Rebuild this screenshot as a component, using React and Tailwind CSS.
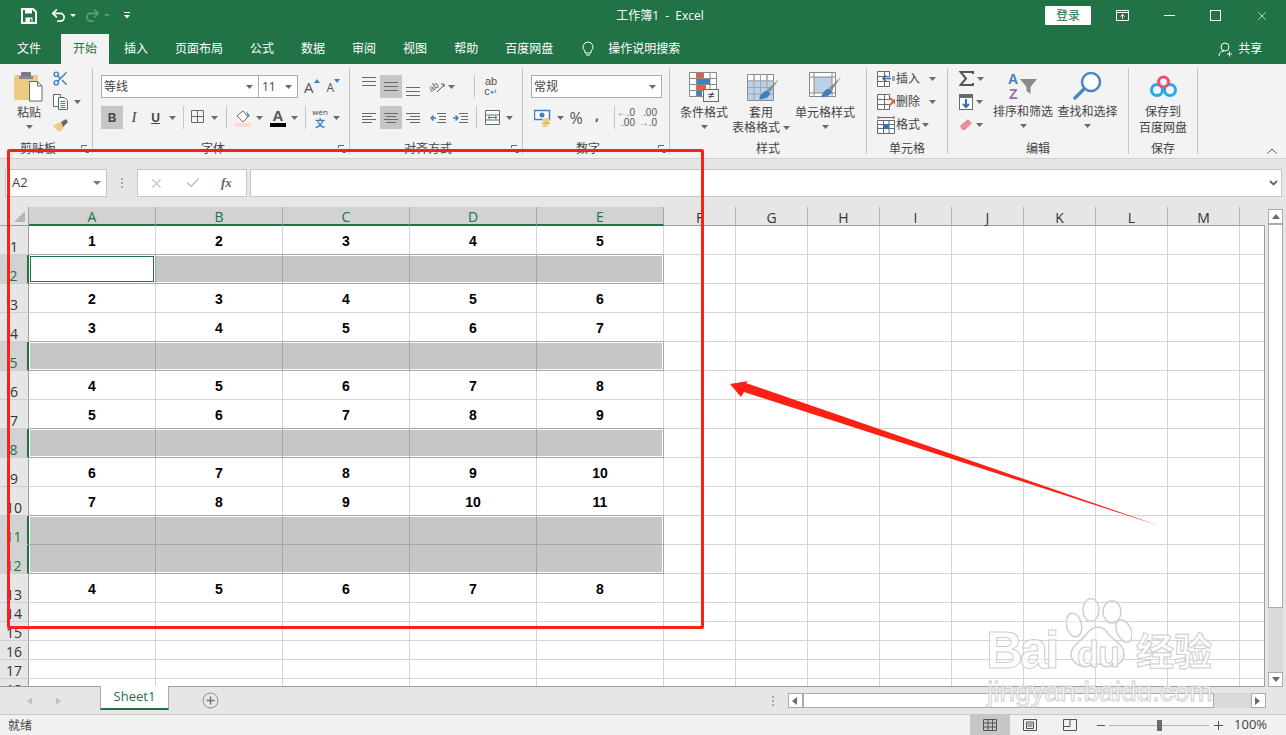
import { Undo2, Redo2, Scissors, X, Check } from 'lucide-react';

const UI = "font-['Open_Sans','Noto_Sans_CJK_SC',sans-serif]";

const COLS = ['A', 'B', 'C', 'D', 'E', 'F', 'G', 'H', 'I', 'J', 'K', 'L', 'M', ''];

const ROWS = [
  { n: 1, vals: [1, 2, 3, 4, 5] },
  { n: 2, band: 'single', active: true },
  { n: 3, vals: [2, 3, 4, 5, 6] },
  { n: 4, vals: [3, 4, 5, 6, 7] },
  { n: 5, band: 'single' },
  { n: 6, vals: [4, 5, 6, 7, 8] },
  { n: 7, vals: [5, 6, 7, 8, 9] },
  { n: 8, band: 'single' },
  { n: 9, vals: [6, 7, 8, 9, 10] },
  { n: 10, vals: [7, 8, 9, 10, 11] },
  { n: 11, band: 'top' },
  { n: 12, band: 'bottom' },
  { n: 13, vals: [4, 5, 6, 7, 8] },
  { n: 14, short: true },
  { n: 15, short: true },
  { n: 16, short: true },
  { n: 17, short: true },
  { n: 18, short: true },
];

const TABS = [
  { label: '文件', cls: 'ml-[17px] text-white' },
  { label: '开始', cls: 'ml-[20px] px-3 bg-[#f3f3f3] text-[#217346]' },
  { label: '插入', cls: 'ml-[15px] text-white' },
  { label: '页面布局', cls: 'ml-[27px] text-white' },
  { label: '公式', cls: 'ml-[27px] text-white' },
  { label: '数据', cls: 'ml-[27px] text-white' },
  { label: '审阅', cls: 'ml-[27px] text-white' },
  { label: '视图', cls: 'ml-[27px] text-white' },
  { label: '帮助', cls: 'ml-[27px] text-white' },
  { label: '百度网盘', cls: 'ml-[27px] text-white' },
];

function Caret({ cls = '' }) {
  return (
    <svg width="7" height="4" viewBox="0 0 7 4" className={`shrink-0 ${cls}`}>
      <path d="M0 0h7L3.5 4z" fill="#6a6a6a" />
    </svg>
  );
}

function Launcher() {
  return (
    <svg width="8" height="8" viewBox="0 0 8 8" className="absolute right-[3px] bottom-[1px]">
      <path d="M0.5 3V0.5H6M7.5 7.5L4 4M7.5 4.5v3h-3" fill="none" stroke="#666" />
    </svg>
  );
}

function Group({ w, label, launcher, children }) {
  return (
    <div className={`${w} h-[86px] shrink-0 relative flex flex-col border-r border-[#c6c6c6]`}>
      <div className="h-[74px] flex">{children}</div>
      <div className={`h-[12px] leading-[14px] text-xs text-center text-[#444] ${launcher ? 'pr-4' : ''}`}>{label}</div>
      {launcher && <Launcher />}
    </div>
  );
}

function Sep() {
  return <div className="w-px h-[23px] bg-[#c6c6c6] shrink-0" />;
}

function Lines({ rows, cls = '' }) {
  // rows: [x1, x2] per line
  return (
    <svg width="16" height="12" viewBox="0 0 16 12" className={cls}>
      {rows.map((r, i) => (
        <path key={i} d={`M${r[0]} ${1.5 + i * (rows.length === 3 ? 4 : 3)}H${r[1]}`} stroke="#6a6a6a" strokeWidth="1" />
      ))}
    </svg>
  );
}

function PasteIcon() {
  return (
    <svg width="30" height="32" viewBox="0 0 30 32">
      <rect x="0" y="4" width="24" height="25" rx="2" fill="#eecb84" />
      <rect x="7" y="1" width="10" height="6" rx="1" fill="#7a7a7a" />
      <rect x="5" y="5" width="14" height="3" fill="#8a8a8a" />
      <path d="M15.5 10.5h8l4.5 4.5v15H15.5z" fill="#fff" stroke="#6a6a6a" />
      <path d="M23.5 10.5V15H28" fill="none" stroke="#6a6a6a" />
    </svg>
  );
}

function CopyIcon() {
  return (
    <svg width="16" height="16" viewBox="0 0 16 16">
      <path d="M0.5 0.5h7v12h-7z" fill="#fff" stroke="#666" />
      <path d="M5.5 3.5h6l3 3v9h-9z" fill="#fff" stroke="#666" />
      <path d="M7.5 7.5h5M7.5 9.5h5M7.5 11.5h5M7.5 13.5h5" stroke="#3f7fbf" />
    </svg>
  );
}

function BrushIcon() {
  return (
    <svg width="18" height="16" viewBox="0 0 18 16">
      <path d="M1 9L8 5l4 6-5 4z" fill="#eecb84" />
      <path d="M9 5l5-3 2 3-5 5z" fill="#6a6a6a" />
    </svg>
  );
}

function BigGridBase({ children }) {
  return (
    <svg width="32" height="30" viewBox="0 0 32 30" className="ml-[4px]">
      <path d="M0.5 0.5h26v26h-26zM0.5 7h26M0.5 13.5h26M0.5 20h26M7 0.5v26M13.5 0.5v26M20 0.5v26" fill="#fff" stroke="#8a8a8a" />
      {children}
    </svg>
  );
}

function CondIcon() {
  return (
    <svg width="30" height="30" viewBox="0 0 30 30">
      <path d="M0.5 0.5h27v24h-27zM0.5 6.5h27M0.5 12.5h27M0.5 18.5h27M7.5 0.5v24M14.5 0.5v24M21 0.5v24" fill="#fff" stroke="#8a8a8a" />
      <rect x="8" y="1" width="6" height="5" fill="#d9633f" />
      <rect x="8" y="7" width="6" height="5" fill="#d9633f" />
      <rect x="8" y="7" width="13" height="5" fill="#3f7fbf" />
      <rect x="8" y="13" width="9" height="5" fill="#d9633f" />
      <rect x="8" y="19" width="5" height="5" fill="#3f7fbf" />
      <rect x="14.5" y="17.5" width="15" height="12" fill="#f3f3f3" stroke="#6a6a6a" />
      <text x="22" y="27" fontSize="11" textAnchor="middle" fill="#333" className="font-['Liberation_Sans',sans-serif]">≠</text>
    </svg>
  );
}

function BrushTip() {
  return (
    <>
      <path d="M32 5L23 18l-3-2z" fill="#8a8a8a" />
      <path d="M12 25c2-6 6-9 9-8l2 2c0 3-5 7-11 6z" fill="#3f7fbf" />
    </>
  );
}

function TableStyleIcon() {
  return (
    <BigGridBase>
      <rect x="1" y="7" width="25" height="19" fill="#bcd0e8" />
      <path d="M0.5 7h26M0.5 13.5h26M0.5 20h26M7 0.5v26M13.5 0.5v26M20 0.5v26" stroke="#9aa8b8" />
      <BrushTip />
    </BigGridBase>
  );
}

function CellStyleIcon() {
  return (
    <svg width="32" height="30" viewBox="0 0 32 30">
      <path d="M0.5 0.5h26v24h-26z" fill="#fff" stroke="#8a8a8a" />
      <rect x="5" y="5" width="18" height="16" fill="#bcd0e8" />
      <path d="M0.5 5h26M0.5 21h26M5 0.5v24M23 0.5v24" stroke="#8a8a8a" />
      <BrushTip />
    </svg>
  );
}

function CellOpIcon({ kind }) {
  return (
    <svg width="24" height="18" viewBox="0 0 24 18">
      <path d="M0.5 1.5h7v5h-7zM0.5 6.5h7v5h-7zM0.5 11.5h7v5h-7zM7.5 1.5h5v5h-5zM7.5 11.5h5v5h-5z" fill="#fff" stroke="#6a6a6a" />
      {kind === 'insert' && (
        <>
          <rect x="15" y="6" width="8" height="5" fill="#a6a6a6" />
          <path d="M14 8.5H6M9 5.5l-3 3 3 3" fill="none" stroke="#2f72b8" strokeWidth="1.6" />
        </>
      )}
      {kind === 'delete' && <path d="M13 5l7 7M20 5l-7 7" stroke="#d9633f" strokeWidth="1.8" />}
    </svg>
  );
}

function FormatIcon() {
  return (
    <svg width="20" height="18" viewBox="0 0 20 18">
      <path d="M0.5 4.5h17v13h-17zM0.5 8.5h17M0.5 12.5h17M6.5 4.5v13M12 4.5v13" fill="#fff" stroke="#6a6a6a" />
      <rect x="6" y="8" width="6" height="5" fill="#2f72b8" />
      <path d="M1 1.5h16M1 0v3M17 0v3" stroke="#2f72b8" />
    </svg>
  );
}

function Paw() {
  return (
    <svg width="66" height="70" viewBox="0 0 66 70" className="absolute left-[1066px] top-[598px]">
      <g fill="#ffffff" fillOpacity="0.55" stroke="#cfcfcf" strokeWidth="1.5">
        <ellipse cx="25" cy="12" rx="8" ry="11.5" />
        <ellipse cx="46" cy="14" rx="9" ry="11" />
        <ellipse cx="8" cy="27" rx="7.5" ry="12" transform="rotate(-12 8 27)" />
        <ellipse cx="58" cy="33" rx="7" ry="12" transform="rotate(-25 58 33)" />
        <path d="M32 29c6 0 9 5 13 10 5 5 13 8 13 17 0 8-7 12-14 12-5 0-8-2-12-2s-8 2-13 2C11 68 5 63 5 56c0-8 9-12 13-17 4-5 8-10 14-10z" />
      </g>
    </svg>
  );
}

function Watermark() {
  const stroke = "text-white/70 [-webkit-text-stroke:1px_#cdcdcd] font-['Liberation_Sans','Noto_Sans_CJK_SC',sans-serif] font-bold absolute";
  return (
    <div className="absolute inset-0 pointer-events-none">
      <Paw />
      <span className={`${stroke} left-[986px] top-[622px] text-[51px] leading-[58px] tracking-[-3px]`}>Bai</span>
      <span className={`${stroke} left-[1077px] top-[634px] text-[36px] leading-[42px] tracking-[-1px]`}>du</span>
      <span className={`${stroke} left-[1136px] top-[631px] text-[38px] leading-[42px]`}>经验</span>
      <span className="absolute left-[987px] top-[676px] text-[28px] leading-[32px] text-white/70 [-webkit-text-stroke:1px_#d0d0d0] font-['Liberation_Sans',sans-serif]">jingyan.baidu.com</span>
    </div>
  );
}

function Cell({ col, i, row }) {
  const isData = i < 5;
  const w = i < 5 ? 'w-[127px]' : i < 13 ? 'w-[72px]' : 'flex-1';
  const next = ROWS[ROWS.indexOf(row) + 1];
  const darkBottom = isData && (row.band || (next && next.band));
  const darkRight = isData && row.band;
  const border = `${darkBottom ? 'border-b-[#a6a6a6]' : 'border-b-[#d4d4d4]'} ${darkRight ? 'border-r-[#a6a6a6]' : 'border-r-[#d4d4d4]'}`;
  const band = isData ? row.band : null;

  let inner = null;
  if (band) {
    const t = band === 'bottom' ? '' : 'mt-px';
    const b = band === 'top' ? '' : 'mb-px';
    const l = i === 0 ? 'ml-px' : '';
    const r = i === 4 ? 'mr-px' : '';
    if (row.active && i === 0) {
      inner = <div className="flex-1 m-px bg-white border border-[#217346]" />;
    } else {
      inner = <div className={`flex-1 bg-[#c6c6c6] ${t} ${b} ${l} ${r}`} />;
    }
  }

  return (
    <div className={`${w} shrink-0 h-full flex border-r border-b bg-white ${border} font-['Liberation_Sans',sans-serif] font-bold text-sm text-black ${band ? 'items-stretch' : 'items-center justify-center pt-[2px]'} ${i === 13 ? 'border-r-0' : ''}`}>
      {inner}
      {!band && isData && row.vals && row.vals[i]}
    </div>
  );
}

function SheetRow({ row }) {
  const h = row.short ? 'h-[19px]' : 'h-[29px]';
  const sel = !!row.band;
  return (
    <div className={`${h} shrink-0 flex`}>
      <div className={`w-[29px] shrink-0 flex items-end justify-center text-[14px] leading-[14px] border-b border-b-[#cfcfcf] ${UI} ${sel ? 'bg-[#d2d2d2] text-[#217346] border-r-2 border-r-[#217346]' : 'bg-[#e6e6e6] text-[#333] border-r border-r-[#9e9e9e]'}`}>
        <span>{row.n}</span>
      </div>
      {COLS.map((c, i) => (
        <Cell key={i} col={c} i={i} row={row} />
      ))}
    </div>
  );
}

function ColHeader() {
  return (
    <div className={`h-[19px] shrink-0 flex bg-[#e6e6e6] ${UI}`}>
      <div className="w-[29px] shrink-0 flex items-end justify-end pr-[3px] pb-[3px] border-b border-r border-[#9e9e9e]">
        <div className="w-0 h-0 border-l-[11px] border-l-transparent border-b-[11px] border-b-[#b4b4b4]" />
      </div>
      {COLS.map((c, i) => (
        <div
          key={i}
          className={`shrink-0 flex items-center justify-center pt-[2px] text-[14px] ${i < 5 ? 'w-[127px] bg-[#d2d2d2] text-[#217346] border-b-2 border-b-[#217346] border-r border-r-[#a9a9a9]' : i < 13 ? 'w-[72px] text-[#333] border-b border-b-[#9e9e9e] border-r border-r-[#b4b4b4]' : 'flex-1 border-b border-b-[#9e9e9e]'}`}
        >
          {c}
        </div>
      ))}
    </div>
  );
}

function ScrollBtn({ dir }) {
  const tri = {
    up: 'M1 6h8L5 1z',
    down: 'M1 1h8L5 6z',
    left: 'M6 0v8L1 4z',
    right: 'M1 0v8L6 4z',
  }[dir];
  return (
    <div className="w-[15px] h-[15px] shrink-0 bg-white border border-[#ababab] flex items-center justify-center">
      <svg width="10" height="8" viewBox="0 0 10 8"><path d={tri} fill="#6a6a6a" /></svg>
    </div>
  );
}

function TitleBar() {
  return (
    <div className={`h-[34px] shrink-0 bg-[#217346] flex items-center pb-[3px] text-white ${UI}`}>
      <svg width="16" height="16" viewBox="0 0 16 16" className="ml-[21px]">
        <path d="M1 1h11l3 3v11H1z" fill="none" stroke="#fff" strokeWidth="2" />
        <rect x="4" y="1" width="7" height="4.5" fill="#fff" />
        <rect x="4.5" y="9.5" width="7" height="5" fill="#fff" />
        <rect x="9" y="11" width="1.5" height="3" fill="#217346" />
      </svg>
      <Undo2 size={17} strokeWidth={2.4} className="ml-[13px]" />
      <svg width="6" height="3" viewBox="0 0 6 3" className="ml-[3px]"><path d="M0 0h6L3 3z" fill="#fff" /></svg>
      <Redo2 size={17} strokeWidth={2.4} className="ml-[8px] text-[#5e9b7e]" />
      <svg width="6" height="3" viewBox="0 0 6 3" className="ml-[3px]"><path d="M0 0h6L3 3z" fill="#5e9b7e" /></svg>
      <svg width="6" height="7" viewBox="0 0 6 7" className="ml-[14px]"><path d="M0 0h6v1H0zM0 3h6L3 6.5z" fill="#fff" /></svg>
      <div className="ml-[464px] w-[132px] text-xs text-center whitespace-pre">工作簿1  -  Excel</div>
      <div className="ml-[319px] w-[46px] h-[19px] bg-white rounded-[1px] text-[#217346] text-xs flex items-center justify-center">登录</div>
      <svg width="14" height="11" viewBox="0 0 14 11" className="ml-[25px]">
        <path d="M0.5 0.5h12v10h-12zM0.5 2.5h12M6.5 9V4.5M4.5 6.5l2-2 2 2" fill="none" stroke="#fff" />
      </svg>
      <div className="ml-[34px] w-[11px] h-px bg-white" />
      <div className="ml-[35px] w-[11px] h-[11px] border border-white" />
      <X size={14} strokeWidth={1.2} className="ml-[34px]" />
    </div>
  );
}

function TabRow() {
  return (
    <div className={`h-[30px] shrink-0 bg-[#217346] flex text-xs leading-[30px] ${UI}`}>
      {TABS.map((t) => (
        <div key={t.label} className={`h-full ${t.cls}`}>{t.label}</div>
      ))}
      <svg width="14" height="16" viewBox="0 0 14 16" className="ml-[28px] mt-[7px]">
        <path d="M7 1a5 5 0 0 0-3 9v2h6v-2a5 5 0 0 0-3-9zM5 14h4" fill="none" stroke="#fff" />
      </svg>
      <div className="ml-[13px] text-white">操作说明搜索</div>
      <svg width="15" height="15" viewBox="0 0 15 15" className="ml-[538px] mt-[8px]">
        <circle cx="7" cy="5" r="4" fill="none" stroke="#fff" />
        <path d="M1 14c0-3 2-5 5-5M9 12h5M11.5 9.500v5" fill="none" stroke="#fff" />
      </svg>
      <div className="ml-[5px] text-white">共享</div>
    </div>
  );
}

function Ribbon() {
  return (
    <div className={`h-[94px] shrink-0 bg-[#f3f3f3] pt-1 flex relative text-xs text-[#444] ${UI}`}>
      {/* 剪贴板 */}
      <Group w="w-[93px]" label="剪贴板" launcher>
        <div className="w-[58px] flex flex-col items-center pt-[3px]">
          <PasteIcon />
          <div className="mt-[1px] leading-[18px]">粘贴</div>
          <Caret cls="mt-[3px]" />
        </div>
        <div className="flex flex-col -mt-px">
          <div className="h-[23px] flex items-center -ml-[6px]"><Scissors size={17} className="text-[#3f7fbf]" /></div>
          <div className="h-[23px] flex items-center -ml-[5px]">
            <CopyIcon />
            <Caret cls="ml-[5px]" />
          </div>
          <div className="h-[23px] flex items-center -ml-[6px]"><BrushIcon /></div>
        </div>
      </Group>

      {/* 字体 */}
      <Group w="w-[257px]" label="字体" launcher>
        <div className="pl-2 pt-[7px] flex flex-col gap-2">
          <div className="h-[23px] flex items-center">
            <div className="w-[158px] h-[23px] bg-white border border-[#ababab] flex items-center justify-between pl-[2px] pr-[5px]">
              <span>等线</span><Caret />
            </div>
            <div className="w-[40px] h-[23px] -ml-px bg-white border border-[#ababab] flex items-center justify-between pl-[3px] pr-[5px]">
              <span>11</span><Caret />
            </div>
            <div className="ml-[6px] flex items-start text-[15px] leading-[18px] text-[#555]">
              A<svg width="6" height="4" viewBox="0 0 6 4" className="mt-[1px]"><path d="M0 4h6L3 0z" fill="#3f7fbf" /></svg>
            </div>
            <div className="ml-[7px] flex items-start text-[12px] leading-[18px] mt-[2px] text-[#555]">
              A<svg width="6" height="4" viewBox="0 0 6 4"><path d="M0 0h6L3 4z" fill="#3f7fbf" /></svg>
            </div>
          </div>
          <div className="h-[23px] flex items-center">
            <div className="w-[22px] h-[23px] bg-[#c6c6c6] flex items-center justify-center font-['Liberation_Sans',sans-serif] font-bold text-[#444]">B</div>
            <div className="w-[22px] text-center font-['Liberation_Serif',serif] italic text-[15px]">I</div>
            <div className="w-[21px] text-center underline font-['Liberation_Sans',sans-serif] font-bold text-[#444]">U</div>
            <Caret cls="ml-[3px]" />
            <div className="w-[7px]" /><Sep />
            <svg width="16" height="16" viewBox="0 0 16 16" className="ml-[7px]">
              <path d="M0.500 0.500h12v12h-12zM6.500 0.500v12M0.500 6.500h12" fill="none" stroke="#6a6a6a" />
            </svg>
            <Caret cls="ml-[4px]" />
            <div className="w-[8px]" /><Sep />
            <svg width="18" height="18" viewBox="0 0 18 18" className="ml-[8px]">
              <path d="M2 7l6-5 5 6-5 5z" fill="#fff" stroke="#6a6a6a" />
              <path d="M11 2l4 5-2 1z" fill="#3f7fbf" />
              <rect x="0" y="14" width="16" height="4" fill="#f9dccf" />
            </svg>
            <Caret cls="ml-[3px]" />
            <div className="w-[7px] shrink-0" />
            <div className="w-[16px] flex flex-col items-center">
              <span className="font-['Liberation_Sans',sans-serif] font-bold text-[15px] leading-[14px] text-[#555]">A</span>
              <span className="w-[16px] h-[4px] bg-black" />
            </div>
            <Caret cls="ml-[5px]" />
            <div className="w-[7px]" /><Sep />
            <div className="ml-[6px] w-[16px] flex flex-col items-center gap-[2px]">
              <span className="text-[8px] leading-[8px]">wén</span>
              <span className="text-[10px] leading-[10px] font-bold text-[#3f7fbf]">文</span>
            </div>
            <Caret cls="ml-[5px]" />
          </div>
        </div>
      </Group>

      {/* 对齐方式 */}
      <Group w="w-[173px]" label="对齐方式" launcher>
        <div className="pl-[8px] pt-[7px] flex flex-col gap-2">
          <div className="h-[23px] flex items-center">
            <div className="w-[22px] h-[23px] flex items-start justify-center pt-[1px]"><Lines rows={[[1, 15], [1, 15], [1, 15]]} /></div>
            <div className="w-[22px] h-[23px] bg-[#c6c6c6] flex items-center justify-center"><Lines rows={[[1, 15], [1, 15], [1, 15]]} /></div>
            <div className="w-[22px] h-[23px] flex items-end justify-center"><Lines rows={[[1, 15], [1, 15], [1, 15]]} /></div>
            <svg width="20" height="18" viewBox="0 0 20 18" className="ml-[2px]">
              <text x="3" y="13" fontSize="9" fill="#555" transform="rotate(-35 6 10)" className="font-['Liberation_Sans',sans-serif]">ab</text>
              <path d="M11 14l7-7M15 6h3v3" fill="none" stroke="#555" />
            </svg>
            <Caret cls="ml-[2px]" />
            <div className="w-[19px]" /><Sep />
            <div className="ml-[8px] w-[16px] flex flex-col items-center leading-[10px] text-[#555] font-['Liberation_Sans',sans-serif]">
              <span className="text-[11px]">ab</span>
              <span className="text-[11px]">c<span className="text-[#3f7fbf] text-[9px]">↵</span></span>
            </div>
          </div>
          <div className="h-[23px] flex items-center">
            <div className="w-[22px] flex justify-center"><Lines rows={[[1, 15], [1, 11], [1, 15], [1, 11]]} /></div>
            <div className="w-[22px] h-[23px] bg-[#c6c6c6] flex items-center justify-center"><Lines rows={[[1, 15], [3, 13], [1, 15], [3, 13]]} /></div>
            <div className="w-[22px] flex justify-center"><Lines rows={[[1, 15], [5, 15], [1, 15], [5, 15]]} /></div>
            <svg width="17" height="12" viewBox="0 0 17 12" className="ml-[6px]">
              <path d="M7 1.500h9M9 4.500h7M9 7.500h7M7 10.500h9" stroke="#6a6a6a" />
              <path d="M6 6H1M3.500 3.500L1 6l2.500 2.500" fill="none" stroke="#3f7fbf" strokeWidth="1.500" />
            </svg>
            <svg width="17" height="12" viewBox="0 0 17 12" className="ml-[5px]">
              <path d="M7 1.500h9M9 4.500h7M9 7.500h7M7 10.500h9" stroke="#6a6a6a" />
              <path d="M1 6h5M3.500 3.500L6 6 3.500 8.500" fill="none" stroke="#3f7fbf" strokeWidth="1.500" />
            </svg>
            <div className="w-[7px]" /><Sep />
            <svg width="15" height="15" viewBox="0 0 15 15" className="ml-[8px]">
              <path d="M0.500 0.500h14v14h-14zM0.500 5h14M0.500 10h14" fill="#fff" stroke="#6a6a6a" />
              <path d="M3 7.500h9M5 5.800L3 7.500l2 1.700M10 5.800l2 1.700-2 1.700" fill="none" stroke="#3f7fbf" />
            </svg>
            <Caret cls="ml-[6px]" />
          </div>
        </div>
      </Group>

      {/* 数字 */}
      <Group w="w-[147px]" label="数字" launcher>
        <div className="pl-2 pt-[7px] flex flex-col gap-2">
          <div className="w-[131px] h-[23px] bg-white border border-[#ababab] flex items-center justify-between pl-[2px] pr-[5px]">
            <span>常规</span><Caret />
          </div>
          <div className="h-[23px] flex items-center">
            <svg width="18" height="18" viewBox="0 0 18 18" className="ml-[3px]">
              <rect x="0.500" y="1.500" width="15" height="9" fill="#fff" stroke="#3f7fbf" strokeWidth="1.500" />
              <circle cx="8" cy="6" r="2.500" fill="#3f7fbf" />
              <ellipse cx="12" cy="11" rx="4" ry="1.500" fill="#eecb84" />
              <ellipse cx="12" cy="14" rx="4" ry="1.500" fill="#e7b95f" />
              <ellipse cx="11" cy="17" rx="3" ry="1" fill="#eecb84" />
            </svg>
            <Caret cls="ml-[5px]" />
            <span className="ml-[3px] w-[18px] text-center text-[16px] leading-[20px] text-[#555]">%</span>
            <span className="ml-[6px] w-[12px] text-center font-bold text-[14px] leading-[10px] pb-[5px] text-[#555]">,</span>
            <div className="w-[11px]" /><Sep />
            <div className="ml-[2px] w-[18px] flex flex-col items-end text-[10px] leading-[10px] text-[#555] font-['Liberation_Sans',sans-serif]">
              <span><span className="text-[#3f7fbf] font-bold">←</span>.0</span>
              <span>.00</span>
            </div>
            <div className="ml-[4px] w-[18px] flex flex-col items-end text-[10px] leading-[10px] text-[#555] font-['Liberation_Sans',sans-serif]">
              <span>.00</span>
              <span><span className="text-[#3f7fbf] font-bold">→</span>.0</span>
            </div>
          </div>
        </div>
      </Group>

      {/* 样式 */}
      <Group w="w-[197px]" label="样式">
        <div className="w-[68px] flex flex-col items-center pt-[4px]">
          <CondIcon />
          <div className="mt-[2px] leading-[17px] whitespace-nowrap">条件格式</div>
          <Caret cls="mt-[4px]" />
        </div>
        <div className="-ml-[6px] w-[58px] flex flex-col items-center pt-[6px]">
          <TableStyleIcon />
          <div className="leading-[17px]">套用</div>
          <div className="leading-[14px] whitespace-nowrap flex items-center">表格格式<Caret cls="ml-[3px]" /></div>
        </div>
        <div className="w-[70px] flex flex-col items-center pt-[4px]">
          <CellStyleIcon />
          <div className="mt-[2px] leading-[17px] whitespace-nowrap">单元格样式</div>
          <Caret cls="mt-[4px]" />
        </div>
      </Group>

      {/* 单元格 */}
      <Group w="w-[81px]" label="单元格">
        <div className="pl-[10px] flex flex-col -mt-[1px] w-full">
          <div className="h-[23px] flex items-center">
            <CellOpIcon kind="insert" /><span className="-ml-[6px] bg-[#f3f3f3] px-px">插入</span><Caret cls="ml-[8px]" />
          </div>
          <div className="h-[23px] flex items-center">
            <CellOpIcon kind="delete" /><span className="-ml-[6px] bg-[#f3f3f3] px-px">删除</span><Caret cls="ml-[8px]" />
          </div>
          <div className="h-[23px] flex items-center">
            <FormatIcon /><span className="-ml-[2px] px-px">格式</span><Caret cls="ml-px" />
          </div>
        </div>
      </Group>

      {/* 编辑 */}
      <Group w="w-[181px]" label="编辑">
        <div className="w-[44px] pl-[11px] flex flex-col -mt-px">
          <div className="h-[23px] flex items-center">
            <svg width="15" height="15" viewBox="0 0 15 15"><path d="M14 3V1H1.500L7 7.500 1.500 14H14v-2" fill="none" stroke="#555" strokeWidth="2" /></svg>
            <Caret cls="ml-[3px]" />
          </div>
          <div className="h-[23px] flex items-center">
            <svg width="14" height="16" viewBox="0 0 14 16">
              <rect x="0.500" y="3.500" width="13" height="12" fill="#fff" stroke="#6a6a6a" />
              <rect x="0" y="0" width="14" height="4" fill="#6a6a6a" />
              <path d="M7 5v8M4 10l3 3 3-3" fill="none" stroke="#2f72b8" strokeWidth="2" />
            </svg>
            <Caret cls="ml-[3px]" />
          </div>
          <div className="h-[23px] flex items-center">
            <svg width="14" height="13" viewBox="0 0 14 13"><path d="M1 8l8-7 4 4-7 7H3z" fill="#ec8a9c" /></svg>
            <Caret cls="ml-[3px]" />
          </div>
        </div>
        <div className="w-[62px] flex flex-col items-center pt-[3px] shrink-0">
          <svg width="30" height="30" viewBox="0 0 30 30">
            <text x="0" y="13" fontSize="14" fontWeight="bold" fill="#3f7fbf" className="font-['Liberation_Sans',sans-serif]">A</text>
            <text x="1" y="28" fontSize="14" fontWeight="bold" fill="#9c6bb5" className="font-['Liberation_Sans',sans-serif]">Z</text>
            <path d="M12 8h17l-6.500 8v7l-4-3v-4z" fill="#8a8a8a" />
          </svg>
          <div className="mt-[2px] leading-[17px] whitespace-nowrap">排序和筛选</div>
          <Caret cls="mt-[4px]" />
        </div>
        <div className="w-[65px] ml-px flex flex-col items-center pt-[3px] shrink-0">
          <svg width="30" height="30" viewBox="0 0 30 30">
            <circle cx="18" cy="11" r="9" fill="#fff" stroke="#4a86c0" strokeWidth="2.500" />
            <path d="M11 18L2 27" stroke="#4a86c0" strokeWidth="3.500" strokeLinecap="round" />
          </svg>
          <div className="mt-[2px] leading-[17px] whitespace-nowrap">查找和选择</div>
          <Caret cls="mt-[4px]" />
        </div>
      </Group>

      {/* 保存 */}
      <Group w="w-[69px]" label="保存">
        <div className="w-full flex flex-col items-center pt-[7px]">
          <svg width="27" height="23" viewBox="0 0 27 23">
            <circle cx="7" cy="15" r="5.500" fill="none" stroke="#25a9ea" strokeWidth="3" />
            <circle cx="20" cy="15" r="5.500" fill="none" stroke="#25a9ea" strokeWidth="3" />
            <circle cx="13.500" cy="7" r="5" fill="none" stroke="#f0506e" strokeWidth="3" />
          </svg>
          <div className="mt-[6px] leading-[16px]">保存到</div>
          <div className="leading-[16px]">百度网盘</div>
        </div>
      </Group>

      <svg width="10" height="6" viewBox="0 0 10 6" className="absolute left-[1267px] top-[84px]">
        <path d="M0.500 5.500L5 1l4.500 4.500" fill="none" stroke="#555" />
      </svg>
    </div>
  );
}

function FormulaBar() {
  return (
    <div className={`h-[49px] shrink-0 bg-[#e6e6e6] border-t border-[#d0d0d0] flex pt-[10px] pl-[5px] ${UI}`}>
      <div className="w-[102px] h-[28px] bg-white border border-[#c6c6c6] flex items-center justify-between pl-[6px] pr-[5px] text-[13px] text-[#444]">
        <span>A2</span>
        <svg width="8" height="4" viewBox="0 0 8 4"><path d="M0 0h8L4 4z" fill="#777" /></svg>
      </div>
      <div className="w-[30px] h-[28px] flex flex-col items-center justify-center gap-[2px]">
        <span className="w-[2px] h-[2px] bg-[#a6a6a6]" />
        <span className="w-[2px] h-[2px] bg-[#a6a6a6]" />
        <span className="w-[2px] h-[2px] bg-[#a6a6a6]" />
      </div>
      <div className="w-[110px] h-[28px] bg-white border border-[#c6c6c6] flex items-center pl-[11px]">
        <X size={15} strokeWidth={2} className="text-[#c6c6c6]" />
        <Check size={16} strokeWidth={2.500} className="ml-[21px] text-[#c6c6c6]" />
        <span className="ml-[20px] font-['Liberation_Serif',serif] italic font-bold text-[13px] text-[#666]">fx</span>
      </div>
      <div className="ml-[3px] w-[1032px] h-[28px] bg-white border border-[#c6c6c6] flex items-center justify-end pr-[3px]">
        <svg width="9" height="6" viewBox="0 0 9 6"><path d="M1 1l3.500 3.500L8 1" fill="none" stroke="#666" strokeWidth="1.800" /></svg>
      </div>
    </div>
  );
}

function Sheet() {
  return (
    <div className="h-[480px] shrink-0 flex bg-[#e6e6e6] overflow-hidden">
      <div className="w-[1265px] shrink-0 flex flex-col">
        <ColHeader />
        <div className="flex-1 flex flex-col overflow-hidden border-r border-b border-[#9e9e9e]">
          {ROWS.map((r) => <SheetRow key={r.n} row={r} />)}
        </div>
      </div>
      <div className="ml-[3px] w-[15px] flex flex-col pt-[2px] bg-[#e6e6e6]">
        <ScrollBtn dir="up" />
        <div className="flex-1 bg-[#d9d9d9] flex flex-col">
          <div className="h-[384px] bg-white border border-[#ababab]" />
        </div>
        <ScrollBtn dir="down" />
      </div>
    </div>
  );
}

function TabBar() {
  return (
    <div className={`h-[28px] shrink-0 bg-[#e6e6e6] border-b border-[#c6c6c6] flex ${UI}`}>
      <svg width="5" height="8" viewBox="0 0 5 8" className="ml-[27px] mt-[10px]"><path d="M5 0v8L0 4z" fill="#c0c0c0" /></svg>
      <svg width="5" height="8" viewBox="0 0 5 8" className="ml-[24px] mt-[10px]"><path d="M0 0v8l5-4z" fill="#c0c0c0" /></svg>
      <div className="ml-[39px] w-[69px] h-[24px] -mt-px bg-white border-x border-[#ababab] border-b-2 border-b-[#217346] flex items-center justify-center text-[13px] text-[#217346]">
        Sheet1
      </div>
      <svg width="17" height="17" viewBox="0 0 17 17" className="ml-[33px] mt-[5px]">
        <circle cx="8.500" cy="8.500" r="7.500" fill="none" stroke="#8a8a8a" />
        <path d="M8.500 4.500v8M4.500 8.500h8" stroke="#777" strokeWidth="1.500" />
      </svg>
      <div className="ml-[553px] mt-[9px] flex flex-col gap-[2px]">
        <span className="w-[2px] h-[2px] bg-[#a6a6a6]" />
        <span className="w-[2px] h-[2px] bg-[#a6a6a6]" />
        <span className="w-[2px] h-[2px] bg-[#a6a6a6]" />
      </div>
      <div className="ml-[14px] mt-[6px] h-[15px] w-[478px] flex">
        <ScrollBtn dir="left" />
        <div className="flex-1 bg-[#d9d9d9] flex">
          <div className="w-[411px] bg-white border border-[#ababab]" />
        </div>
        <ScrollBtn dir="right" />
      </div>
    </div>
  );
}

function StatusBar() {
  return (
    <div className={`h-[20px] shrink-0 bg-[#f1f1f1] flex items-center text-xs text-[#444] ${UI}`}>
      <span className="ml-2 pt-[2px]">就绪</span>
      <div className="ml-[938px] w-[40px] h-full bg-[#c6c6c6] flex items-center justify-center">
        <svg width="14" height="12" viewBox="0 0 14 12"><path d="M0.500 0.500h13v11h-13zM0.500 4h13M0.500 8h13M5 0.500v11M9.500 0.500v11" fill="none" stroke="#555" /></svg>
      </div>
      <div className="w-[40px] flex justify-center">
        <svg width="14" height="12" viewBox="0 0 14 12"><path d="M0.500 0.500h13v11h-13zM3.500 3h7v6.500h-7zM4.500 5h5M4.500 7h5" fill="none" stroke="#555" /></svg>
      </div>
      <div className="w-[40px] flex justify-center">
        <svg width="14" height="12" viewBox="0 0 14 12"><path d="M0.500 0.500h13v11h-13zM0.500 7.500h6.500v-7" fill="none" stroke="#555" /></svg>
      </div>
      <div className="ml-[7px] w-[8px] h-px bg-[#555]" />
      <div className="ml-[4px] w-[100px] h-px bg-[#b4b4b4] flex items-center justify-center">
        <div className="w-[5px] h-[11px] bg-[#6a6a6a] shrink-0" />
      </div>
      <svg width="9" height="9" viewBox="0 0 9 9" className="ml-[5px]"><path d="M0 4.500h9M4.500 0v9" stroke="#555" /></svg>
      <span className="ml-[11px] text-[13px]">100%</span>
    </div>
  );
}

export default function App() {
  return (
    <div className="relative w-[1286px] h-[735px] overflow-hidden flex flex-col bg-white">
      <TitleBar />
      <TabRow />
      <Ribbon />
      <FormulaBar />
      <Sheet />
      <TabBar />
      <StatusBar />

      {/* annotation overlay */}
      <div className="absolute left-[7px] top-[149px] w-[697px] h-[480px] border-[3px] border-[#ff2015] rounded-[2px]" />
      <svg width="1286" height="735" viewBox="0 0 1286 735" className="absolute left-0 top-0 pointer-events-none">
        <polygon points="730,384 748,381 746,383 1160,526 744,392 741,397" fill="#ff2015" />
      </svg>
      <Watermark />
    </div>
  );
}
